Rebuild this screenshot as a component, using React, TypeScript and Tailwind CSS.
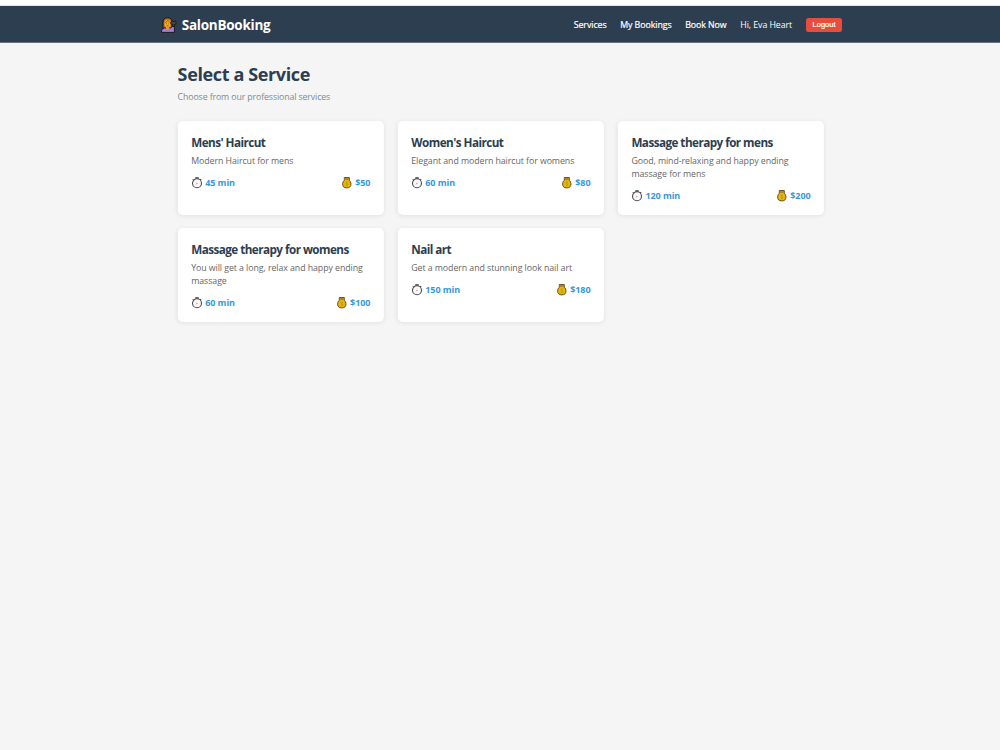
import type { ReactNode } from 'react';

type Service = {
  name: string;
  lines: string[];
  minutes: number;
  price: number;
};

const services: Service[] = [
  { name: "Mens' Haircut", lines: ['Modern Haircut for mens'], minutes: 45, price: 50 },
  { name: "Women's Haircut", lines: ['Elegant and modern haircut for womens'], minutes: 60, price: 80 },
  {
    name: 'Massage therapy for mens',
    lines: ['Good, mind-relaxing and happy ending', 'massage for mens'],
    minutes: 120,
    price: 200,
  },
  {
    name: 'Massage therapy for womens',
    lines: ['You will get a long, relax and happy ending', 'massage'],
    minutes: 60,
    price: 100,
  },
  { name: 'Nail art', lines: ['Get a modern and stunning look nail art'], minutes: 150, price: 180 },
];

function StylistIcon() {
  return (
    <svg viewBox="0 0 16 16" className="h-4 w-4 shrink-0" aria-hidden="true">
      <path d="M2 11.5V5Q2.2 .8 6.6 .8T11 5v6.5Z" fill="#b8711a" stroke="#17130f" strokeWidth="1" />
      <path d="M.6 15.4v-1.8q.3-2.5 3-2.7h6l2.2-1.6h1.6v6.1Z" fill="#a67be0" stroke="#17130f" strokeWidth=".9" />
      <path d="M5 9.5h3.2v2L6.6 12.8 5 11.5Z" fill="#e8a21c" />
      <ellipse cx="6.6" cy="6.6" rx="3.2" ry="3.9" fill="#f0aa28" />
      <path d="M3.6 6Q6 5.5 6.8 3 7.6 5 9.6 5.8" fill="none" stroke="#b06d18" strokeWidth="1" />
      <path d="M5 6.8h.8m1.6 0h.8M5.7 8.8h1.8" stroke="#704512" strokeWidth=".7" />
      <path d="M9.8 5.1 14.9 4v3.2l-1.6.2v2h-1.6V7.4l-1.9-.3Z" fill="#4a4a4a" stroke="#111" strokeWidth=".7" />
    </svg>
  );
}

function StopwatchIcon() {
  return (
    <svg viewBox="0 0 12 12" className="h-3 w-3 shrink-0" aria-hidden="true">
      <path d="M4.4 1h3.4M9.3 2.3l.9.9M2.6 2.4l-.6.7" stroke="#3d3d3d" strokeWidth="1.3" />
      <circle cx="6.1" cy="6.2" r="4.5" fill="#fbf8f9" stroke="#4c4c4c" strokeWidth="1.1" />
      <path d="M6.1 6.4l-1.3 1" stroke="#e3a0b0" strokeWidth=".8" />
      <circle cx="6.1" cy="6.3" r=".6" fill="#c98593" />
    </svg>
  );
}

function MoneyBagIcon() {
  return (
    <svg viewBox="0 0 12 12" className="h-3 w-3 shrink-0" aria-hidden="true">
      <path d="M3.4.5h5v2.8q1.7 1.4 1.7 3.6 0 4-4.2 4T1.7 6.9q0-2.2 1.7-3.6Z" fill="#f2b305" stroke="#54431f" strokeWidth=".9" />
      <path d="M3.8.9h4.2v2.1H3.8Z" fill="#b58122" />
      <path d="M6.9 5.2q-2-.6-2 .6 0 .8 1 1t1 1q0 1.2-2 .6M5.9 4.3v5" fill="none" stroke="#8bae22" strokeWidth=".8" />
    </svg>
  );
}

function Fact({ icon, children }: { icon: ReactNode; children: ReactNode }) {
  return (
    <span className="flex items-center gap-[2px]">
      {icon}
      <span>{children}</span>
    </span>
  );
}

function ServiceCard({ service }: { service: Service }) {
  return (
    <article className="rounded-[5px] bg-white px-[13.6px] pt-[13px] shadow-[0_1px_5px_rgba(0,0,0,0.08)]">
      <h2 className="text-[11.7px] leading-[17px] font-bold tracking-[-0.54px] text-[#2c3e50]">{service.name}</h2>
      <p className="mt-[4px] text-[8.8px] leading-[12.8px] tracking-[-0.07px] text-[#666]">
        {service.lines.map((line) => (
          <span key={line} className="block whitespace-nowrap">
            {line}
          </span>
        ))}
      </p>
      <div className="mt-[8px] flex items-center justify-between text-[9px] leading-[14px] font-bold tracking-[-0.07px] text-[#3498db]">
        <Fact icon={<StopwatchIcon />}>{service.minutes} min</Fact>
        <Fact icon={<MoneyBagIcon />}>${service.price}</Fact>
      </div>
    </article>
  );
}

export default function App() {
  return (
    <div className="min-h-screen bg-[#f5f5f5] font-['Open_Sans','Noto_Sans',sans-serif]">
      <div className="h-[6px] border-b border-[#e1e6e6] bg-white" />
      <header className="h-[37px] border-b border-[#657280] bg-[#2c3e50]">
        <div className="mx-auto flex h-full w-[684.6px] items-center justify-between pt-[2px] pl-[3px] text-white">
          <div className="flex items-center gap-[5px] text-[13.5px] font-bold tracking-[-0.25px]">
            <StylistIcon />
            <span>SalonBooking</span>
          </div>
          <nav className="flex items-center gap-[13.6px] text-[8.8px] tracking-[-0.06px] whitespace-nowrap">
            <a className="pt-[2px] [-webkit-text-stroke:0.2px_white]">Services</a>
            <a className="pt-[2px] [-webkit-text-stroke:0.2px_white]">My Bookings</a>
            <a className="pt-[2px] [-webkit-text-stroke:0.2px_white]">Book Now</a>
            <span className="pt-[2px]">Hi, Eva Heart</span>
            <button className="h-[14px] w-[36.5px] rounded-[2.5px] bg-[#e74c3c] font-['Liberation_Sans',sans-serif] text-[7.5px] leading-[14px] tracking-normal [-webkit-text-stroke:0.2px_white]">
              Logout
            </button>
          </nav>
        </div>
      </header>
      <main className="mx-auto w-[646.6px] translate-x-[0.9px] pt-[19px]">
        <h1 className="text-[18px] leading-[24px] font-bold tracking-[-0.37px] text-[#2c3e50]">Select a Service</h1>
        <p className="mt-[5px] text-[8.8px] leading-[13px] tracking-[-0.13px] text-[#7f8c8d]">
          Choose from our professional services
        </p>
        <section className="mt-[17px] grid auto-rows-[93.7px] grid-cols-3 gap-[13.7px]">
          {services.map((service) => (
            <ServiceCard key={service.name} service={service} />
          ))}
        </section>
      </main>
    </div>
  );
}
